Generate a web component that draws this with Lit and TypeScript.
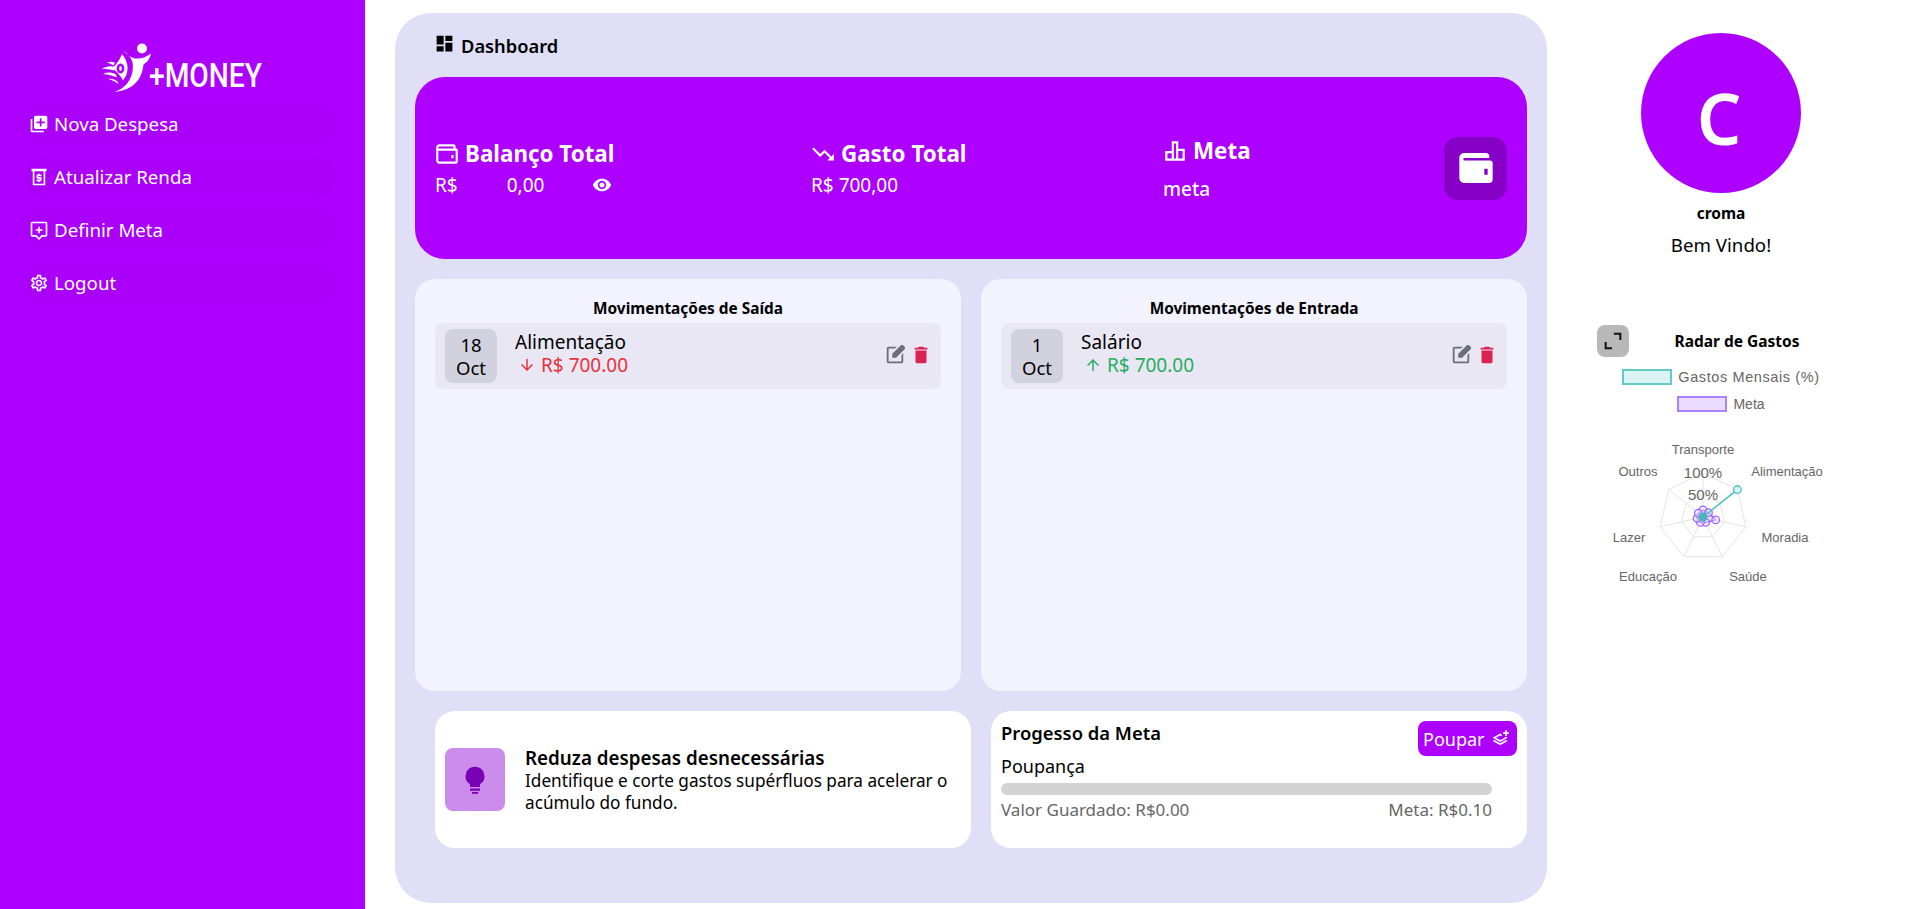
import { css, html, LitElement, svg } from "lit";
import { customElement } from "lit/decorators.js";

const ic = {
  addPhotos: "M4 6H2v14c0 1.1.9 2 2 2h14v-2H4V6zm16-4H8c-1.1 0-2 .9-2 2v12c0 1.1.9 2 2 2h12c1.1 0 2-.9 2-2V4c0-1.1-.9-2-2-2zm-1 9h-4v4h-2v-4H9V9h4V5h2v4h4v2z",
  quote: "M3 2h18v3h-1.5v17h-15V5H3V2zm3.5 3v15h11V5h-11zM13 8v1h2v2h-4v1h3c.6 0 1 .4 1 1v3c0 .6-.4 1-1 1h-1v1h-2v-1H9v-2h4v-1h-3c-.6 0-1-.4-1-1v-3c0-.6.4-1 1-1h1V8h2z",
  comment: "M20 2H4c-1.1 0-2 .9-2 2v14c0 1.1.9 2 2 2h4l4 4 4-4h4c1.1 0 2-.9 2-2V4c0-1.1-.9-2-2-2zm0 16h-4.83L12 21.17 8.83 18H4V4h16v14zm-9-2h2v-3h3v-2h-3V8h-2v3H8v2h3z",
  gear: "M19.43 12.98c.04-.32.07-.64.07-.98 0-.34-.03-.66-.07-.98l2.11-1.65c.19-.15.24-.42.12-.64l-2-3.46c-.09-.16-.26-.25-.44-.25-.06 0-.12.01-.17.03l-2.49 1c-.52-.4-1.08-.73-1.69-.98l-.38-2.65C14.46 2.18 14.25 2 14 2h-4c-.25 0-.46.18-.49.42l-.38 2.65c-.61.25-1.17.59-1.69.98l-2.49-1c-.06-.02-.12-.03-.18-.03-.17 0-.34.09-.43.25l-2 3.46c-.13.22-.07.49.12.64l2.11 1.65c-.04.32-.07.65-.07.98 0 .33.03.66.07.98l-2.11 1.65c-.19.15-.24.42-.12.64l2 3.46c.09.16.26.25.44.25.06 0 .12-.01.17-.03l2.49-1c.52.4 1.08.73 1.69.98l.38 2.65c.03.24.24.42.49.42h4c.25 0 .46-.18.49-.42l.38-2.65c.61-.25 1.17-.59 1.69-.98l2.49 1c.06.02.12.03.18.03.17 0 .34-.09.43-.25l2-3.46c.12-.22.07-.49-.12-.64l-2.11-1.65zm-1.98-1.71c.04.31.05.52.05.73 0 .21-.02.43-.05.73l-.14 1.13.89.7 1.08.84-.7 1.21-1.27-.51-1.04-.42-.9.68c-.43.32-.84.56-1.25.73l-1.06.43-.16 1.13-.2 1.35h-1.4l-.19-1.35-.16-1.13-1.06-.43c-.43-.18-.83-.41-1.23-.71l-.91-.7-1.06.43-1.27.51-.7-1.21 1.08-.84.89-.7-.14-1.13c-.03-.31-.05-.54-.05-.74s.02-.43.05-.73l.14-1.13-.89-.7-1.08-.84.7-1.21 1.27.51 1.04.42.9-.68c.43-.32.84-.56 1.25-.73l1.06-.43.16-1.13.2-1.35h1.39l.19 1.35.16 1.13 1.06.43c.43.18.83.41 1.23.71l.91.7 1.06-.43 1.27-.51.7 1.21-1.07.85-.89.7.14 1.13zM12 8c-2.21 0-4 1.79-4 4s1.79 4 4 4 4-1.79 4-4-1.79-4-4-4zm0 6c-1.1 0-2-.9-2-2s.9-2 2-2 2 .9 2 2-.9 2-2 2z",
  dash: "M3 13h8V3H3v10zm0 8h8v-6H3v6zm10 0h8V11h-8v10zm0-18v6h8V3h-8z",
  walletLine: "M5 3h13c1.1 0 2 .9 2 2v2h.5c.8 0 1.5.7 1.5 1.5V19c0 1.1-.9 2-2 2H5c-1.7 0-3-1.3-3-3V6c0-1.7 1.3-3 3-3zm0 2c-.6 0-1 .4-1 1s.4 1 1 1h13V5H5zM4 8.8V18c0 .6.4 1 1 1h15V9H5c-.4 0-.7 0-1-.2zM16 13h2v3h-2v-3z",
  trendDown: "M16 18l2.29-2.29-4.88-4.88-4 4L2 7.41 3.41 6l6 6 4-4 6.3 6.29L22 12v6z",
  chart: "M9 3h6v7h6v11H3V12h6V3zm2 2v14h2V5h-2zm4 7v7h4v-7h-4zm-6 2H5v5h4v-5z",
  eye: "M12 4.5C7 4.5 2.73 7.61 1 12c1.73 4.39 6 7.5 11 7.5s9.27-3.11 11-7.5c-1.73-4.39-6-7.5-11-7.5zM12 17c-2.76 0-5-2.24-5-5s2.24-5 5-5 5 2.24 5 5-2.24 5-5 5zm0-8c-1.66 0-3 1.34-3 3s1.34 3 3 3 3-1.34 3-3-1.34-3-3-3z",
  walletFill: "M5 3h13c1.1 0 2 .9 2 2v1H4.5v1.5H20.500c.8 0 1.500.7 1.500 1.500V19c0 1.100-.9 2-2 2H5c-1.700 0-3-1.300-3-3V6c0-1.700 1.300-3 3-3zm12 9.500V16h2v-3.500h-2z",
  edit: "M5 21q-.825 0-1.412-.587Q3 19.825 3 19V5q0-.825.588-1.413Q4.175 3 5 3h8.925l-2 2H5v14h14v-6.950l2-2V19q0 .825-.587 1.413Q19.825 21 19 21Zm4-6v-4.250l9.175-9.175q.3-.3.675-.45.375-.15.75-.15.4 0 .763.15.362.15.662.45L22.425 3q.275.3.425.662Q23 4.025 23 4.400t-.137.737q-.138.363-.438.663L13.250 15Z",
  trash: "M6 19c0 1.100.9 2 2 2h8c1.100 0 2-.9 2-2V7H6v12zM19 4h-3.500l-1-1h-5l-1 1H5v2h14V4z",
  down: "M20 12l-1.410-1.410L13 16.170V4h-2v12.170l-5.580-5.590L4 12l8 8 8-8z",
  up: "M4 12l1.410 1.410L11 7.830V20h2V7.830l5.580 5.590L20 12l-8-8-8 8z",
  bulb: "M12 1.500a7.500 7.500 0 0 0-4 13.850V17.500h8v-2.150A7.500 7.500 0 0 0 12 1.500zM8 18.800h8v1.900H8zM9.500 21.500h5V23h-5z",
  layers: "M11 5.500l-9 5 9 5 9-5-2.200-1.200-1.800 1 .9.200L11 13.300 5.800 10.500 11 7.700l2 1.100V6.600l-2-1.100zM4.200 13.300L2 14.500l9 5 9-5-2.200-1.200L11 17.100l-6.800-3.800zM17 1.500v2.500h-2.500v2H17v2.500h2V6h2.500V4H19V1.500h-2z",
};

const icon = (d: string) => svg`<svg viewBox="0 0 24 24" fill="currentColor"><path d=${d}></path></svg>`;

const LABELS = [
  ["Transporte", 122, 24],
  ["Outros", 57, 46],
  ["Alimentação", 206, 46],
  ["Moradia", 204, 112],
  ["Saúde", 167, 151],
  ["Educação", 67, 151],
  ["Lazer", 48, 112],
] as const;

const CX = 122;
const CY = 87;
const point = (i: number, r: number) => {
  const a = (-90 + (i * 360) / 7) * (Math.PI / 180);
  return [CX + Math.cos(a) * r, CY + Math.sin(a) * r];
};
const ring = (r: number) => [0, 1, 2, 3, 4, 5, 6].map((i) => point(i, r).join(",")).join(" ");

@customElement("app-root")
export class AppRoot extends LitElement {
  static override styles = css`
    :host {
      display: flex;
      height: 909px;
      overflow: hidden;
      background: #fff;
      color: #000;
      font-family: "Noto Sans", "Open Sans", sans-serif;
    }
    svg { display: block; flex: none; }

    .sidebar {
      width: 365px;
      flex: none;
      background: #ad00ff;
      color: #fff;
      box-sizing: border-box;
      padding: 43px 0 0 30px;
    }
    .logo { display: flex; align-items: flex-start; margin-left: 72px; height: 49px; }
    .logo svg { width: 49px; height: 49px; }
    .logo span {
      font-family: "Roboto", sans-serif;
      font-size: 34px;
      font-weight: 500;
      line-height: 1;
      margin-left: -2px;
      margin-top: 15px;
      transform: scaleX(.83);
      transform-origin: left center;
    }
    nav { display: flex; flex-direction: column; gap: 20px; margin-top: 15px; }
    nav a {
      display: flex;
      align-items: center;
      gap: 5px;
      height: 33px;
      width: 300px;
      font-size: 18.700px;
      background: #aa00fa;
      box-shadow: 0 0 12px 6px #aa00fa;
      border-radius: 8px;
    }
    nav svg { width: 20px; height: 20px; margin-left: -1px; }

    .panel {
      width: 1152px;
      flex: none;
      box-sizing: border-box;
      margin: 13px 0 6px 30px;
      padding: 0 20px;
      background: #dfdff7;
      border-radius: 36px;
      display: flex;
      flex-direction: column;
    }
    .crumb { height: 64px; display: flex; align-items: center; gap: 6px; padding-left: 19px; box-sizing: border-box; font-size: 18.300px; font-weight: 600; }
    .crumb svg { width: 21px; height: 21px; margin-top: -3px; }

    .summary {
      height: 182px;
      flex: none;
      background: #ad00ff;
      color: #fff;
      border-radius: 30px;
      display: flex;
      align-items: center;
      padding: 0 20px;
      box-sizing: border-box;
    }
    .stat { width: 376px; flex: none; }
    .stat + .stat { width: 352px; }
    .stat + .stat + .stat { width: 281px; }
    .stat h3 { margin: 1px 0 0; display: flex; align-items: center; gap: 5px; font-size: 22.400px; line-height: 30px; font-weight: 700; }
    .stat h3 svg { width: 26px; height: 26px; margin-left: -1px; }
    .stat p { margin: 3px 0 0; font-size: 19px; line-height: 26px; display: flex; align-items: center; }
    .stat p.name { margin-top: 10px; font-weight: 500; }
    .balance span:nth-child(2) { margin-left: 49px; }
    .balance svg { width: 20px; height: 20px; margin-left: 48px; }
    .wallet-box {
      width: 63px;
      height: 63px;
      flex: none;
      border-radius: 14px;
      background: #8700c6;
      display: grid;
      place-items: center;
    }
    .wallet-box svg { width: 40px; height: 40px; }

    .lists { flex: none; height: 412px; margin-top: 20px; display: grid; grid-template-columns: 1fr 1fr; gap: 20px; }
    .list { background: #f3f3ff; border-radius: 20px; padding: 20px 20px 0; box-sizing: border-box; }
    .list h4 { margin: 0; text-align: center; font-size: 15.400px; line-height: 20px; font-weight: 700; }
    .row {
      margin-top: 4px;
      height: 66px;
      background: #e9e7f4;
      border-radius: 8px;
      padding: 0 10px;
      display: flex;
      align-items: center;
    }
    .date {
      width: 52px;
      height: 54px;
      flex: none;
      background: #d2d2df;
      border-radius: 8px;
      text-align: center;
      font-size: 18.500px;
      line-height: 23px;
      padding-top: 4px;
      box-sizing: border-box;
    }
    .info { flex: 1; margin-left: 18px; font-size: 19px; line-height: 23px; margin-top: -5px; }
    .amount { display: flex; align-items: center; gap: 5px; }
    .amount svg { width: 18px; height: 18px; margin-left: 3px; }
    .out { color: #e5333b; }
    .in { color: #27ae60; }
    .actions { display: flex; gap: 4px; margin-top: -3px; margin-right: -1px; }
    .actions svg { width: 22px; height: 22px; }
    .edit { color: #6e6e78; }
    .del { color: #dc2153; }

    .bottom { flex: none; height: 137px; margin-top: 20px; padding-left: 20px; display: grid; grid-template-columns: 536px 536px; gap: 20px; }
    .tip, .goal { background: #fff; border-radius: 20px; box-sizing: border-box; }
    .tip { display: flex; align-items: center; padding: 0 10px; gap: 20px; }
    .bulb { width: 60px; height: 63px; flex: none; background: #cc8ceb; border-radius: 8px; display: grid; place-items: center; color: #7a00b5; }
    .bulb svg { width: 30px; height: 30px; }
    .tip b { display: block; font-size: 18.800px; line-height: 24px; font-weight: 600; }
    .tip span { display: block; font-size: 17.200px; line-height: 22px; }
    .goal { padding: 10px 10px 0; }
    .goal-head { display: flex; justify-content: space-between; align-items: flex-start; }
    .goal-head b { font-size: 18.400px; line-height: 24px; font-weight: 600; }
    button {
      all: unset;
      display: flex;
      align-items: center;
      gap: 6px;
      height: 35px;
      width: 99px;
      box-sizing: border-box;
      padding-left: 5px;
      background: #ad00ff;
      color: #fff;
      border-radius: 8px;
      font-size: 18px;
      font-family: inherit;
    }
    button svg { width: 20px; height: 20px; }
    .goal-name { font-size: 18px; line-height: 24px; margin-top: -2px; }
    .bar { width: 491px; height: 12px; border-radius: 6px; background: #d3d3d3; margin-top: 5px; }
    .goal-foot { width: 491px; display: flex; justify-content: space-between; font-size: 17px; line-height: 22px; color: #666; margin-top: 4px; }

    .side { flex: 1; padding-right: 24px; display: flex; flex-direction: column; align-items: center; }
    .avatar {
      width: 160px;
      height: 160px;
      flex: none;
      margin-top: 33px;
      box-sizing: border-box;
      padding: 9px 4px 0 0;
      border-radius: 50%;
      background: #ad00ff;
      color: #fff;
      display: grid;
      place-items: center;
      font-size: 70px;
      font-weight: 600;
    }
    .user { font-size: 15.500px; font-weight: 700; line-height: 20px; margin-top: 10px; }
    .welcome { font-size: 18.700px; line-height: 24px; margin-top: 10px; }
    .radar { width: 280px; margin-top: 68px; font-family: "Liberation Sans", sans-serif; }
    .radar-head { display: flex; align-items: center; padding: 0 16px; height: 32px; }
    .expand { width: 32px; height: 32px; flex: none; background: #b8b8b8; border-radius: 8px; display: grid; place-items: center; }
    .expand svg { width: 22px; height: 22px; }
    .radar-head b { flex: 1; text-align: center; font-family: "Noto Sans", sans-serif; font-size: 15.500px; margin-top: -1px; }
    .legend { display: flex; flex-direction: column; align-items: center; gap: 11px; margin-top: 12px; font-size: 14px; line-height: 16px; color: #666; }
    .legend div { display: flex; align-items: center; gap: 6px; }
    .legend i { width: 46px; height: 12px; border: 2px solid; display: block; }
    .legend i.teal { background: #d9f3f2; border-color: #62cbc9; }
    .legend i.violet { background: #e9dcff; border-color: #aa80ff; }
    .wide { font-size: 14.500px; letter-spacing: .6px; }
    .chart { margin-top: 18px; }
    .chart text { fill: #666; font-size: 13px; text-anchor: middle; font-family: "Liberation Sans", sans-serif; }
    .chart text.tick { font-size: 15px; }
  `;

  private chart() {
    const violet = [7, 7, 13, 6, 6, 6, 6];
    const teal = [0, 44, 0, 0, 0, 0, 0];
    const spokes = [0, 1, 2, 3, 4, 5, 6].map((i) => point(i, 44));
    const vp = violet.map((v, i) => point(i, v));
    const tp = teal.map((v, i) => point(i, v));
    return svg`<svg class="chart" width="280" height="170" viewBox="0 0 280 170">
      <g fill="none" stroke="#e4e4e4" stroke-width="1">
        <polygon points=${ring(44)}></polygon>
        <polygon points=${ring(22)}></polygon>
        ${spokes.map((s) => svg`<line x1=${CX} y1=${CY} x2=${s[0]} y2=${s[1]}></line>`)}
      </g>
      ${LABELS.map((l) => svg`<text x=${l[1]} y=${l[2]}>${l[0]}</text>`)}
      <text class="tick" x=${CX} y="48">100%</text>
      <text class="tick" x=${CX} y="70">50%</text>
      <polygon points=${vp.map((p) => p.join(",")).join(" ")} fill="#e9dcff" fill-opacity=".6" stroke="#9a66ff" stroke-width="1.500"></polygon>
      ${vp.map((p) => svg`<circle cx=${p[0]} cy=${p[1]} r="3.800" fill="#e9dcff" fill-opacity=".5" stroke="#9a66ff" stroke-width="1.300"></circle>`)}
      <polygon points=${tp.map((p) => p.join(",")).join(" ")} fill="#4bc0c0" fill-opacity=".2" stroke="#4bc0c0" stroke-width="1.500"></polygon>
      <circle cx=${CX} cy=${CY} r="4.500" fill="#4bb4b8"></circle>
      <circle cx=${tp[1][0]} cy=${tp[1][1]} r="3.800" fill="#d9f3f2" stroke="#4bc0c0" stroke-width="1.300"></circle>
    </svg>`;
  }

  private row(day: string, name: string, kind: "in" | "out") {
    return html`<div class="row">
      <div class="date">${day}<br />Oct</div>
      <div class="info">
        ${name}
        <div class="amount ${kind}">${icon(kind === "in" ? ic.up : ic.down)}R$ 700.00</div>
      </div>
      <div class="actions">
        <span class="edit">${icon(ic.edit)}</span>
        <span class="del">${icon(ic.trash)}</span>
      </div>
    </div>`;
  }

  override render() {
    return html`
      <aside class="sidebar">
        <div class="logo">
          <svg viewBox="0 0 49 49" fill="#fff">
            <circle cx="40" cy="5.500" r="5"></circle>
            <path d="M21 7c4 4 8 8 12.500 8.500 6 .5 11-1.500 15.500-5-1 4.500-3 8-7.500 11-1 10-5 17-12 22-5 3-10 4.500-17 5.500 6-2.500 11-5.500 14-10.500 4-6 5-13 4-19-1-4.500-4-8.500-9.500-12.500z"></path>
            <path fill-rule="evenodd" d="M20 11c3.500 4.500 6 9.500 5.500 15.500-.3 4-1.700 7.500-4.500 11-2-4-5-7.500-8.500-10.500l-2-2C15 21 18 16 20 11zM18.500 20.500a3.800 5 0 1 0 .01 0zM18.500 23a1.300 2.500 0 1 1-.01 0z"></path>
            <path d="M0 26c4-3 9-3.500 12.500-2l-.5 3.500c-4-1.500-8-1.500-12-1.500zM1 31c4-2 8-2 13 .5l1 3C11 32.500 6 31.500 1 31zM5 19.500c2.500-1 5-1 8 0l-1.500 3c-2-1.200-4-2.200-6.500-3zM6 36c3-.5 6 0 9.500 2.500l1 2.500C13 38.500 10 37 6 36z"></path>
          </svg>
          <span>+MONEY</span>
        </div>
        <nav>
          <a>${icon(ic.addPhotos)}Nova Despesa</a>
          <a>${icon(ic.quote)}Atualizar Renda</a>
          <a>${icon(ic.comment)}Definir Meta</a>
          <a>${icon(ic.gear)}Logout</a>
        </nav>
      </aside>

      <main class="panel">
        <div class="crumb">${icon(ic.dash)}Dashboard</div>
        <section class="summary">
          <div class="stat">
            <h3>${icon(ic.walletLine)}Balanço Total</h3>
            <p class="balance"><span>R$</span><span>0,00</span>${icon(ic.eye)}</p>
          </div>
          <div class="stat">
            <h3>${icon(ic.trendDown)}Gasto Total</h3>
            <p>R$ 700,00</p>
          </div>
          <div class="stat">
            <h3>${icon(ic.chart)}Meta</h3>
            <p class="name">meta</p>
          </div>
          <div class="wallet-box">${icon(ic.walletFill)}</div>
        </section>

        <section class="lists">
          <div class="list">
            <h4>Movimentações de Saída</h4>
            ${this.row("18", "Alimentação", "out")}
          </div>
          <div class="list">
            <h4>Movimentações de Entrada</h4>
            ${this.row("1", "Salário", "in")}
          </div>
        </section>

        <section class="bottom">
          <div class="tip">
            <div class="bulb">${icon(ic.bulb)}</div>
            <div>
              <b>Reduza despesas desnecessárias</b>
              <span>Identifique e corte gastos supérfluos para acelerar o acúmulo do fundo.</span>
            </div>
          </div>
          <div class="goal">
            <div class="goal-head">
              <b>Progesso da Meta</b>
              <button>Poupar ${icon(ic.layers)}</button>
            </div>
            <div class="goal-name">Poupança</div>
            <div class="bar"></div>
            <div class="goal-foot"><span>Valor Guardado: R$0.00</span><span>Meta: R$0.10</span></div>
          </div>
        </section>
      </main>

      <aside class="side">
        <div class="avatar">C</div>
        <div class="user">croma</div>
        <div class="welcome">Bem Vindo!</div>
        <div class="radar">
          <div class="radar-head">
            <div class="expand">
              <svg viewBox="0 0 24 24" fill="none" stroke="#111" stroke-width="2.200"><path d="M4 13v7h7M20 11V4h-7"></path></svg>
            </div>
            <b>Radar de Gastos</b>
          </div>
          <div class="legend">
            <div class="wide"><i class="teal"></i>Gastos Mensais (%)</div>
            <div><i class="violet"></i>Meta</div>
          </div>
          ${this.chart()}
        </div>
      </aside>
    `;
  }
}

declare global {
  interface HTMLElementTagNameMap {
    "app-root": AppRoot;
  }
}
